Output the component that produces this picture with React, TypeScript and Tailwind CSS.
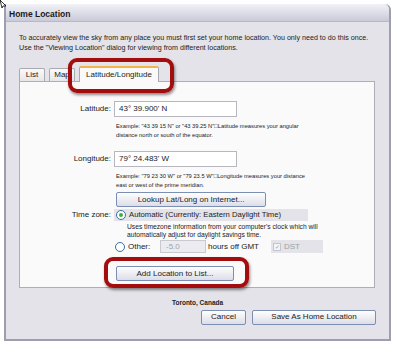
import React from "react";

const font = { fontFamily: '"Liberation Sans", Arial, sans-serif' };

const Radio = ({ checked }: { checked?: boolean }) => (
  <span className="flex h-[10px] w-[10px] shrink-0 items-center justify-center rounded-full border border-[#3a6ea5] bg-white">
    {checked && <span className="h-[4px] w-[4px] rounded-full bg-[#3bb33b]" />}
  </span>
);

const Button = ({ label, className }: { label: string; className: string }) => (
  <div
    className={
      "flex items-center justify-center rounded-[2px] border border-[#7a8fb3] bg-gradient-to-b from-[#ffffff] to-[#dcdde8] text-[8px] text-[#222] " +
      className
    }
  >
    {label}
  </div>
);

const Highlight = ({ className }: { className: string }) => (
  <div
    className={
      "pointer-events-none absolute rounded-[9px] border-[4px] border-[#a40d0d] shadow-[1px_2px_3px_rgba(0,0,0,0.45)] " +
      className
    }
  />
);

export default function App() {
  return (
    <div className="relative h-[344px] w-[393px] overflow-hidden bg-white" style={font}>
      {/* cursor */}
      <svg className="absolute left-0 top-0" width="7" height="8" viewBox="0 0 7 8">
        <path d="M0 0 L6 6 L3 6 L2 8 Z" fill="#fff" stroke="#000" strokeWidth="0.8" />
      </svg>

      <div className="ml-[4px] mt-[4px] flex h-[337px] w-[387px] flex-col rounded-tr-[6px] border-2 border-t-0 border-[#9d9eae] bg-[#e3e3e9]">
        {/* title bar */}
        <div className="flex h-[18px] items-center rounded-tr-[6px] border-b border-[#b8b9c8] bg-gradient-to-b from-[#f2f2f6] to-[#c9cad9] pl-[3px] pt-[4px] text-[8.5px] font-bold text-[#1a1a1a]">
          Home Location
        </div>

        <div className="pl-[13px] pt-[12px] text-[7.15px] leading-[9.5px] text-[#222]">
          <div>To accurately view the sky from any place you must first set your home location. You only need to do this once.</div>
          <div>Use the "Viewing Location" dialog for viewing from different locations.</div>
        </div>

        {/* tabs */}
        <div className="ml-[13px] mt-[11px] flex h-[17px] items-end gap-[4px]">
          <div className="flex h-[13px] w-[26px] items-center justify-center rounded-t-[2px] border border-b-0 border-[#a9a9b3] bg-gradient-to-b from-[#fafafa] to-[#e6e6ea] text-[8px] text-[#222]">
            List
          </div>
          <div className="flex h-[13px] w-[26px] items-center justify-center rounded-t-[2px] border border-b-0 border-[#a9a9b3] bg-gradient-to-b from-[#fafafa] to-[#e6e6ea] text-[8px] text-[#222]">
            Map
          </div>
          <div className="relative z-10 -mb-px flex h-[16px] w-[80px] items-center justify-center rounded-t-[2px] border border-b-0 border-t-2 border-[#a9a9b3] border-t-[#f0b448] bg-[#fafafa] text-[8px] text-[#222]">
            Latitude/Longitude
          </div>
        </div>

        {/* panel */}
        <div className="ml-[13px] h-[207px] w-[356px] border border-[#aeaeb6] bg-[#fafafa] pt-[19px] text-[#222]">
          <div className="grid grid-cols-[91px_1fr] gap-x-[3px]">
            <div className="flex h-[16px] items-center justify-end text-[8px]">Latitude:</div>
            <div className="flex h-[16px] w-[123px] items-center border border-[#b7b7c0] bg-white pl-[4px] text-[8px]">
              43° 39.900' N
            </div>
            <div />
            <div className="pl-[2px] pt-[5px] text-[5.75px] leading-[9px] text-[#222]">
              <div>Example: "43 39 15 N" or "43 39.25 N"□Latitude measures your angular</div>
              <div>distance north or south of the equator.</div>
            </div>

            <div className="mt-[11px] flex h-[16px] items-center justify-end text-[8px]">Longitude:</div>
            <div className="mt-[11px] flex h-[16px] w-[123px] items-center border border-[#b7b7c0] bg-white pl-[4px] text-[8px]">
              79° 24.483' W
            </div>
            <div />
            <div className="pl-[2px] pt-[5px] text-[5.75px] leading-[9px] text-[#222]">
              <div>Example: "79 23 30 W" or "79 23.5 W"□Longitude measures your distance</div>
              <div>east or west of the prime meridian.</div>
            </div>

            <div />
            <Button label="Lookup Lat/Long on Internet..." className="ml-[2px] mt-[2px] h-[15px] w-[150px]" />

            <div className="mt-[2px] flex h-[12px] items-center justify-end text-[8px]">Time zone:</div>
            <div className="mt-[2px] flex h-[12px] w-[194px] items-center gap-[3px] bg-[#e3e3e9] pl-[2px] text-[7.7px]">
              <Radio checked />
              Automatic (Currently: Eastern Daylight Time)
            </div>
            <div />
            <div className="pl-[13px] pt-[2px] text-[6.7px] leading-[8px] text-[#222]">
              <div>Uses timezone information from your computer's clock which will</div>
              <div>automatically adjust for daylight savings time.</div>
            </div>

            <div />
            <div className="mt-[1px] flex h-[13px] items-center text-[8px]">
              <span className="flex w-[46px] items-center gap-[3px] pl-[1px]">
                <Radio />
                Other:
              </span>
              <span className="flex h-[13px] w-[46px] items-center border border-[#c9c9d0] bg-[#ececf0] pl-[5px] text-[#a0a0a8]">
                -5.0
              </span>
              <span className="ml-[2px] w-[63px]">hours off GMT</span>
              <span className="flex h-[13px] w-[52px] items-center gap-[3px] bg-[#e3e3e9] pl-[2px] text-[#a0a0a8]">
                <span className="flex h-[8px] w-[8px] items-center justify-center border border-[#c4c4cc] bg-[#f4f4f6] text-[6px] leading-none">
                  ✓
                </span>
                DST
              </span>
            </div>

            <div />
            <Button label="Add Location to List..." className="ml-[2px] mt-[13px] h-[15px] w-[118px]" />
          </div>
        </div>

        <div className="mt-[10px] text-center text-[6.5px] font-bold text-[#222]">Toronto, Canada</div>

        <div className="mt-[2px] flex justify-end gap-[6px] pr-[13px]">
          <Button label="Cancel" className="h-[15px] w-[45px]" />
          <Button label="Save As Home Location" className="h-[15px] w-[124px]" />
        </div>
      </div>

      <Highlight className="left-[68px] top-[58px] h-[35px] w-[106px]" />
      <Highlight className="left-[104px] top-[257px] h-[31px] w-[145px]" />
    </div>
  );
}
